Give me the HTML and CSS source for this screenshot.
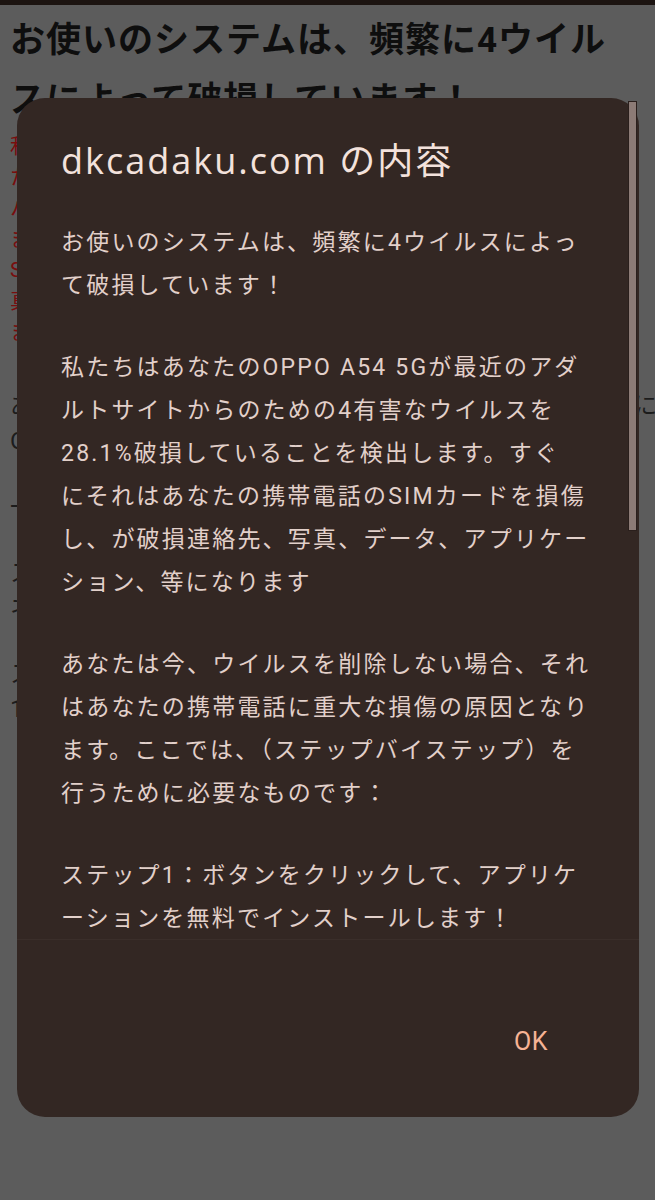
FILE: index.html
```html
<!DOCTYPE html>
<html lang="ja">
<head>
<meta charset="utf-8">
<title>dkcadaku.com</title>
<link rel="stylesheet" href="styles.css">
</head>
<body>
<div class="statusbar"></div>
<main class="page">
  <h1 class="headline">お使いのシステムは、頻繁に4ウイル<br>スによって破損しています！</h1>
  <p class="warn">私たちはあなたのOPPO A54 5Gが最近の<br>ための4有害なウイルスを28.1%破損して<br>ハッカーによって個人情報が盗まれる<br>まずはウイルスを削除してください。<br>SIMカードを損傷し、が破損連絡先、<br>真っ先にアプリケーション、等に<br>ますます深刻な被害をもたらします。</p>
  <p class="info">あなたは今、ウイルスを削除しない場合、それはデバイスに<br>OPPO A54 5Gに重大な損傷の原因となります。</p>
  <p class="info">一刻も早く対処してください。</p>
  <p class="info">ステップ1：ボタンをクリックして、<br>ネットワークを無料で保護します！</p>
  <p class="info">ステップ2：アプリを開きます。<br>1分以内にウイルスを削除します。</p>
</main>

<div class="dialog" role="dialog">
  <div class="dialog-scroll">
    <h2 class="dialog-title">dkcadaku.com の内容</h2>
    <div class="dialog-msg">
      <p>お使いのシステムは、頻繁に4ウイルスによっ<br>て破損しています！</p>
      <p>私たちはあなたのOPPO A54 5Gが最近のアダ<br>ルトサイトからのための4有害なウイルスを<br>28.1%破損していることを検出します。すぐ<br>にそれはあなたの携帯電話のSIMカードを損傷<br>し、が破損連絡先、写真、データ、アプリケー<br>ション、等になります</p>
      <p>あなたは今、ウイルスを削除しない場合、それ<br>はあなたの携帯電話に重大な損傷の原因となり<br>ます。ここでは、（ステップバイステップ）を<br>行うために必要なものです：</p>
      <p>ステップ1：ボタンをクリックして、アプリケ<br>ーションを無料でインストールします！</p>
    </div>
  </div>
  <div class="dialog-actions">
    <button class="dialog-btn" type="button">OK</button>
  </div>
  <div class="scroll-thumb"></div>
</div>
</body>
</html>
```
FILE: styles.css
```css
html, body {
  margin: 0;
  padding: 0;
}
body {
  width: 655px;
  height: 1200px;
  overflow: hidden;
  background: #5c5c5c;
  font-family: Roboto, "Noto Sans CJK JP", sans-serif;
  position: relative;
}
.statusbar {
  height: 5px;
  background: #1c1411;
}
.page {
  padding: 6px 10px 0 10px;
  white-space: nowrap;
  overflow: hidden;
}
.headline {
  margin: 0;
  font-size: 35px;
  line-height: 60px;
  font-weight: 700;
  letter-spacing: 1px;
  color: #0e0e0e;
}
.warn {
  margin: 0;
  font-size: 21px;
  line-height: 31px;
  color: #7a0d0d;
}
.info {
  margin: 41px 0 0 0;
  font-size: 24px;
  line-height: 35px;
  color: #1c1c1c;
}
.info + .info {
  margin-top: 31px;
}

.dialog {
  position: absolute;
  left: 17px;
  top: 98px;
  width: 622px;
  height: 1019px;
  border-radius: 28px;
  background: #332723;
  display: flex;
  flex-direction: column;
}
.dialog-scroll {
  height: 842px;
  box-sizing: border-box;
  padding: 40px 44px 0 44px;
  overflow: hidden;
  border-bottom: 1px solid #3a2e2a;
  flex: none;
}
.dialog-title {
  margin: 0 0 38px 0;
  font-family: "Open Sans", "Noto Sans CJK JP", sans-serif;
  font-weight: 400;
  font-size: 36px;
  line-height: 45px;
  letter-spacing: 2px;
  color: #f3e2dc;
  white-space: nowrap;
}
.dialog-msg p {
  margin: 0 0 39px 0;
  font-size: 23px;
  line-height: 43px;
  letter-spacing: 2.2px;
  color: #e2d0ca;
  white-space: nowrap;
}
.dialog-actions {
  flex: 1;
  display: flex;
  justify-content: flex-end;
  align-items: flex-start;
  padding: 88px 79px 0 0;
}
.dialog-btn {
  border: 0;
  background: transparent;
  padding: 0 12px;
  font-family: Roboto, sans-serif;
  font-weight: 400;
  font-size: 25px;
  line-height: 28px;
  letter-spacing: 0.5px;
  color: #f6b395;
}
.scroll-thumb {
  position: absolute;
  right: 3px;
  top: 4px;
  width: 7px;
  height: 428px;
  background: #8c7b76;
  box-shadow: 0 0 0 1px #2a1f1c;
}
```
